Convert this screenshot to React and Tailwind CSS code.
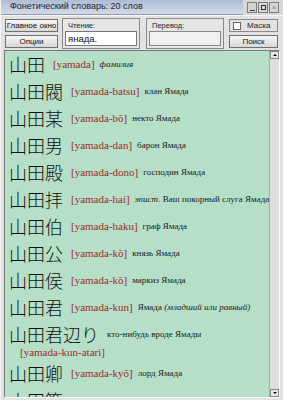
import React from 'react'

const ui = { fontFamily: '"Liberation Sans", Arial, sans-serif' }
const serif = { fontFamily: '"Liberation Serif", "Times New Roman", Times, serif' }
const cjk = { fontFamily: '"Noto Sans CJK JP", "Noto Sans CJK SC", sans-serif' }

const entries = [
    { k: '山田', r: 'yamada', t: <i>фамилия</i> },
    { k: '山田閥', r: 'yamada-batsu', t: 'клан Ямада' },
    { k: '山田某', r: 'yamada-bō', t: 'некто Ямада' },
    { k: '山田男', r: 'yamada-dan', t: 'барон Ямада' },
    { k: '山田殿', r: 'yamada-dono', t: 'господин Ямада' },
    { k: '山田拝', r: 'yamada-hai', t: <><i>эпист.</i> Ваш покорный слуга Ямада</> },
    { k: '山田伯', r: 'yamada-haku', t: 'граф Ямада' },
    { k: '山田公', r: 'yamada-kō', t: 'князь Ямада' },
    { k: '山田侯', r: 'yamada-kō', t: 'маркиз Ямада' },
    { k: '山田君', r: 'yamada-kun', t: <>Ямада <i>(младший или равный)</i></> },
    { k: '山田君辺り', r: 'yamada-kun-atari', t: 'кто-нибудь вроде Ямады', wrap: true },
    { k: '山田卿', r: 'yamada-kyō', t: 'лорд Ямада' },
    { k: '山田箕', r: '', t: '' },
]

const Btn = ({ children, className = '' }) => (
    <div className={`flex items-center justify-center whitespace-nowrap bg-gradient-to-b from-[#f6f6f6] to-[#d8d8d8] border border-[#6f6f6f] text-[8px] text-[#111] ${className}`} style={ui}>
        {children}
    </div>
)

const Group = ({ label, children, className = '' }) => (
    <div className={`flex flex-col border border-[#8a8a8a] bg-[#e6e6e6] px-[2px] pt-[2px] ${className}`}>
        <div className="text-[7.5px] leading-[10px] text-[#222] pl-[3px]" style={ui}>{label}</div>
        {children}
    </div>
)

const WinBtn = ({ children }) => (
    <div className="w-[10px] h-[11px] border border-[#7c7c7c] bg-[#d6d6d6] flex items-center justify-center">
        {children}
    </div>
)

export default function App() {
    return (
        <div className="w-[283px] h-[400px] bg-[#e2e2e2] flex flex-col overflow-hidden border-l border-[#f4f4f4]">
            <div className="h-[15px] flex items-stretch shrink-0">
                <div className="flex-1 flex items-center pl-[9px] bg-gradient-to-b from-[#aebcd4] to-[#d2dae7] border-b border-[#8a9ab8] text-[9px] text-[#1b1f33]" style={ui}>
                    Фонетический словарь: 20 слов
                </div>
                <div className="w-[40px] flex items-center justify-end gap-[1px] pr-[4px] bg-[#d8d8d8]">
                    <WinBtn><div className="w-[5px] h-[1px] bg-[#333] mt-[5px]" /></WinBtn>
                    <WinBtn><div className="w-[5px] h-[5px] border border-[#333]" /></WinBtn>
                    <WinBtn><span className="text-[7px] leading-none text-[#777]" style={ui}>×</span></WinBtn>
                </div>
            </div>

            <div className="h-[35px] shrink-0 flex gap-[4px] px-[4px] pt-[2px] border-t border-[#f8f8f8]">
                <div className="w-[53px] flex flex-col gap-[3px] pt-[1px]">
                    <Btn className="h-[13px]">Главное окно</Btn>
                    <Btn className="h-[13px]">Опции</Btn>
                </div>
                <Group label="Чтение:" className="w-[78px] h-[31px]">
                    <div className="h-[15px] bg-white border border-[#777] text-[9.5px] leading-[13px] pl-[2px] text-[#111]" style={ui}>янада.</div>
                </Group>
                <Group label="Перевод:" className="w-[78px] h-[31px] ml-[2px]">
                    <div className="h-[15px] bg-[#f0f0f0] border border-[#888]" />
                </Group>
                <div className="flex-1 flex flex-col gap-[3px] pt-[1px] ml-[1px] mr-[1px]">
                    <div className="h-[13px] flex items-center gap-[6px] border border-[#8a8a8a] pl-[3px] text-[8px] text-[#222]" style={ui}>
                        <div className="w-[8px] h-[8px] bg-white border border-[#666]" />
                        Маска
                    </div>
                    <Btn className="h-[13px]">Поиск</Btn>
                </div>
            </div>

            <div className="flex-1 mx-[3px] mb-[2px] border border-t-[#777] border-l-[#777] border-r-[#fff] border-b-[#fff] flex overflow-hidden">
                <div className="flex-1 bg-[#b6dfc8] pl-[4px] overflow-hidden">
                    {entries.map((e, i) => (
                        <div key={i} className={e.wrap ? 'h-[39px] pt-[2px]' : 'h-[27px] flex items-center'}>
                            <div className="flex items-center">
                                <span className="text-[18px] leading-[23px] font-light text-[#111] whitespace-nowrap" style={cjk}>{e.k}</span>
                                {!e.wrap && e.r && (
                                    <span className="ml-[8px] text-[11px] text-[#9b2b2b] whitespace-nowrap" style={serif}>[{e.r}]</span>
                                )}
                                <span className={`${e.wrap ? 'ml-[8px]' : 'ml-[5px]'} text-[9px] text-[#1a1a1a] whitespace-nowrap`} style={serif}>{e.t}</span>
                            </div>
                            {e.wrap && (
                                <div className="pl-[11px] text-[11px] leading-[12px] text-[#9b2b2b]" style={serif}>[{e.r}]</div>
                            )}
                        </div>
                    ))}
                </div>
                <div className="w-[10px] shrink-0 bg-[#dedede] border-l border-[#aaa] flex flex-col justify-between">
                    <div className="h-[8px] bg-[#e8e8e8] border border-[#888] flex items-center justify-center">
                        <div className="w-0 h-0 border-l-[2px] border-r-[2px] border-b-[2px] border-l-transparent border-r-transparent border-b-black" />
                    </div>
                    <div className="h-[8px] bg-[#e8e8e8] border border-[#888] flex items-center justify-center">
                        <div className="w-0 h-0 border-l-[2px] border-r-[2px] border-t-[2px] border-l-transparent border-r-transparent border-t-black" />
                    </div>
                </div>
            </div>
        </div>
    )
}
